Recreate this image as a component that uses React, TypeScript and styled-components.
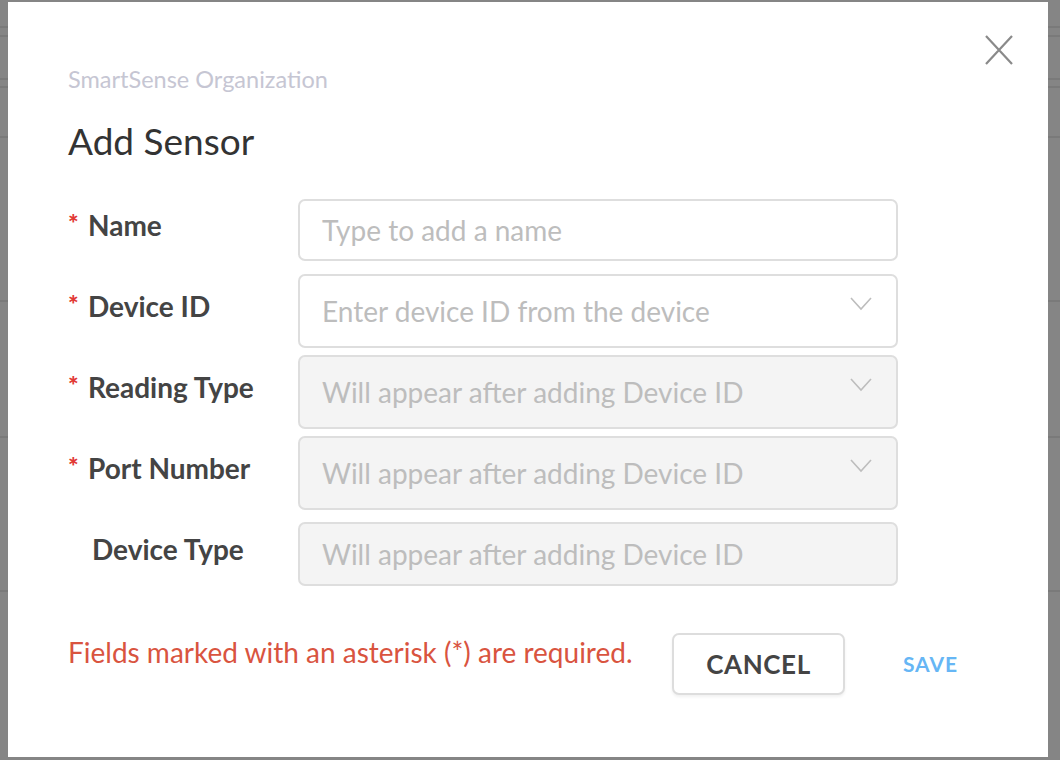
import React from "react";
import styled, { createGlobalStyle } from "styled-components";

const Global = createGlobalStyle`
  html, body { margin: 0; padding: 0; }
  body {
    background: #858585;
    font-family: "Lato", "Open Sans", Arial, sans-serif;
  }
  * { box-sizing: border-box; }
`;

const Backdrop = styled.div`
  width: 1060px;
  height: 760px;
  padding: 2px 12px 3px 8px;
  background-color: #858585;
  background-image:
    linear-gradient(#7a7a7a, #7a7a7a),
    linear-gradient(#7a7a7a, #7a7a7a),
    linear-gradient(#7a7a7a, #7a7a7a),
    linear-gradient(#7a7a7a, #7a7a7a),
    linear-gradient(#7a7a7a, #7a7a7a),
    linear-gradient(#7a7a7a, #7a7a7a),
    linear-gradient(#7a7a7a, #7a7a7a),
    linear-gradient(#7a7a7a, #7a7a7a);
  background-repeat: no-repeat;
  background-size: 100% 2px;
  background-position: 0 26px, 0 35px, 0 78px, 0 86px, 0 136px, 0 300px, 0 436px, 0 590px;
`;

const Modal = styled.div`
  position: relative;
  width: 100%;
  height: 100%;
  background: #ffffff;
  padding: 62px 60px 0 60px;
`;

const CloseButton = styled.button`
  position: absolute;
  top: 33px;
  right: 34px;
  width: 30px;
  height: 30px;
  padding: 0;
  border: none;
  background: transparent;
  display: flex;
  align-items: center;
  justify-content: center;
  cursor: pointer;
`;

const OrgName = styled.div`
  font-size: 23.5px;
  line-height: 30px;
  color: #c6c6d3;
  font-weight: 400;
`;

const Title = styled.h1`
  margin: 25px 0 0 0;
  font-size: 37px;
  line-height: 44px;
  font-weight: 400;
  color: #333333;
`;

const Form = styled.div`
  margin-top: 36px;
  display: flex;
  flex-direction: column;
`;

const Row = styled.div<{ $gap: number }>`
  display: grid;
  grid-template-columns: 230px 600px;
  align-items: center;
  margin-top: ${(p) => p.$gap}px;
`;

const Label = styled.div<{ $indent?: boolean }>`
  display: flex;
  align-items: flex-start;
  padding-bottom: 10px;
  padding-left: ${(p) => (p.$indent ? "24px" : "0")};
  font-size: 28px;
  line-height: 34px;
  font-weight: 700;
  color: #444444;
`;

const Star = styled.span`
  color: #e23a36;
  font-size: 25px;
  line-height: 24px;
  width: 20px;
  font-weight: 900;
  margin-top: 3px;
`;

const Field = styled.div<{ $h: number; $disabled?: boolean }>`
  height: ${(p) => p.$h}px;
  border: 2px solid #dedede;
  border-radius: 7px;
  background: ${(p) => (p.$disabled ? "#f4f4f4" : "#ffffff")};
  display: flex;
  align-items: center;
  justify-content: space-between;
  padding: 0 24px 0 22px;
`;

const Placeholder = styled.span`
  font-size: 28px;
  color: #bdbdbd;
  font-weight: 400;
`;

const Chevron = styled.svg`
  align-self: flex-start;
  margin-top: 21px;
`;

const Footer = styled.div`
  margin-top: 47px;
  display: flex;
  align-items: flex-start;
`;

const Required = styled.div`
  font-size: 28px;
  line-height: 34px;
  color: #d9543f;
  margin-top: 2px;
  width: 604px;
`;

const CancelButton = styled.button`
  width: 173px;
  height: 62px;
  border: 2px solid #dddddd;
  border-radius: 7px;
  background: #ffffff;
  box-shadow: 0 2px 3px rgba(0, 0, 0, 0.06);
  font-family: inherit;
  font-size: 26px;
  letter-spacing: 0.6px;
  font-weight: 700;
  color: #444444;
  cursor: pointer;
`;

const SaveButton = styled.button`
  margin-left: 58px;
  margin-top: 18px;
  padding: 0;
  border: none;
  background: transparent;
  font-family: inherit;
  font-size: 21px;
  letter-spacing: 0.9px;
  font-weight: 700;
  color: #66b6f5;
  cursor: pointer;
`;

const ChevronIcon = () => (
  <Chevron width="22" height="14" viewBox="0 0 22 14">
    <path d="M1 1 L11 12 L21 1" fill="none" stroke="#bdbdbd" strokeWidth="1.6" />
  </Chevron>
);

type FieldDef = {
  label: string;
  required: boolean;
  placeholder: string;
  height: number;
  gap: number;
  disabled: boolean;
  select: boolean;
};

const fields: FieldDef[] = [
  { label: "Name", required: true, placeholder: "Type to add a name", height: 62, gap: 0, disabled: false, select: false },
  { label: "Device ID", required: true, placeholder: "Enter device ID from the device", height: 74, gap: 13, disabled: false, select: true },
  { label: "Reading Type", required: true, placeholder: "Will appear after adding Device ID", height: 74, gap: 7, disabled: true, select: true },
  { label: "Port Number", required: true, placeholder: "Will appear after adding Device ID", height: 74, gap: 7, disabled: true, select: true },
  { label: "Device Type", required: false, placeholder: "Will appear after adding Device ID", height: 64, gap: 12, disabled: true, select: false },
];

export default function App() {
  return (
    <>
      <Global />
      <Backdrop>
        <Modal>
          <CloseButton aria-label="Close">
            <svg width="28" height="30" viewBox="0 0 28 30">
              <path d="M1 1 L27 29 M27 1 L1 29" stroke="#8a8a8a" strokeWidth="2.2" fill="none" />
            </svg>
          </CloseButton>
          <OrgName>SmartSense Organization</OrgName>
          <Title>Add Sensor</Title>
          <Form>
            {fields.map((f) => (
              <Row key={f.label} $gap={f.gap}>
                <Label $indent={!f.required}>
                  {f.required && <Star>*</Star>}
                  {f.label}
                </Label>
                <Field $h={f.height} $disabled={f.disabled}>
                  <Placeholder>{f.placeholder}</Placeholder>
                  {f.select && <ChevronIcon />}
                </Field>
              </Row>
            ))}
          </Form>
          <Footer>
            <Required>Fields marked with an asterisk (*) are required.</Required>
            <CancelButton>CANCEL</CancelButton>
            <SaveButton>SAVE</SaveButton>
          </Footer>
        </Modal>
      </Backdrop>
    </>
  );
}
